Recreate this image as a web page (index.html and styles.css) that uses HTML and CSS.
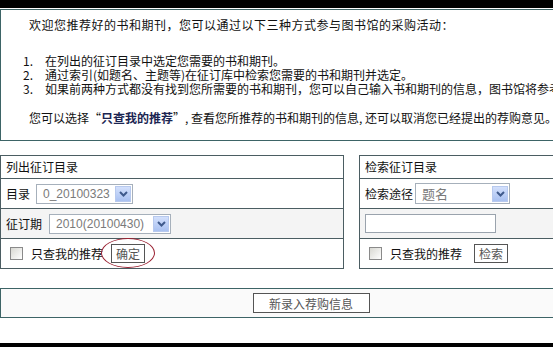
FILE: index.html
```html
<!DOCTYPE html>
<html lang="zh-CN">
<head>
    <meta charset="UTF-8">
    <title>荐购图书和期刊</title>
    <link rel="stylesheet" href="styles.css">
</head>
<body>

<div class="frame-top"></div>

<div class="page">
    <!-- 说明 -->
    <div class="intro">
        <p class="lead">欢迎您推荐好的书和期刊，您可以通过以下三种方式参与图书馆的采购活动：</p>
        <ol class="steps">
            <li><span class="num">1.</span>在列出的征订目录中选定您需要的书和期刊。</li>
            <li><span class="num">2.</span>通过索引(如题名、主题等)在征订库中检索您需要的书和期刊并选定。</li>
            <li><span class="num">3.</span>如果前两种方式都没有找到您所需要的书和期刊，您可以自己输入书和期刊的信息，图书馆将参考您的意见。</li>
        </ol>
        <p class="note">您可以选择“<b>只查我的推荐</b>”, 查看您所推荐的书和期刊的信息, 还可以取消您已经提出的荐购意见。</p>
    </div>

    <div class="panels">
        <!-- 列出征订目录 -->
        <div class="panel panel-list">
            <div class="panel-title">列出征订目录</div>
            <div class="row">
                <span class="label">目录</span>
                <div class="select select-catalog">
                    <span class="select-text">0_20100323</span>
                    <span class="arrow"><svg width="9" height="6" viewBox="0 0 9 6"><path d="M1 1l3.5 3.5L8 1" fill="none" stroke="#3f5a8c" stroke-width="2"/></svg></span>
                </div>
            </div>
            <div class="row row-alt">
                <span class="label">征订期</span>
                <div class="select select-period">
                    <span class="select-text">2010(20100430)</span>
                    <span class="arrow"><svg width="9" height="6" viewBox="0 0 9 6"><path d="M1 1l3.5 3.5L8 1" fill="none" stroke="#3f5a8c" stroke-width="2"/></svg></span>
                </div>
            </div>
            <div class="row row-last">
                <span class="check"></span>
                <span class="check-label">只查我的推荐</span>
                <span class="mark-wrap">
                    <button class="btn">确定</button>
                    <span class="mark"></span>
                </span>
            </div>
        </div>

        <!-- 检索征订目录 -->
        <div class="panel panel-search">
            <div class="panel-title">检索征订目录</div>
            <div class="row">
                <span class="label">检索途径</span>
                <div class="select select-field">
                    <span class="select-text">题名</span>
                    <span class="arrow"><svg width="9" height="6" viewBox="0 0 9 6"><path d="M1 1l3.5 3.5L8 1" fill="none" stroke="#3f5a8c" stroke-width="2"/></svg></span>
                </div>
            </div>
            <div class="row row-alt">
                <input class="text-input" type="text">
            </div>
            <div class="row row-last">
                <span class="check"></span>
                <span class="check-label">只查我的推荐</span>
                <button class="btn btn-search">检索</button>
            </div>
        </div>
    </div>

    <div class="new-bar">
        <button class="btn btn-new">新录入荐购信息</button>
    </div>
</div>

<div class="frame-bottom"></div>

</body>
</html>
```

FILE: styles.css
```css
* {
    box-sizing: border-box;
}
body {
    margin: 0;
    width: 553px;
    height: 347px;
    overflow: hidden;
    background-color: #fff;
    font-family: "Noto Sans CJK SC", sans-serif;
    font-size: 12px;
    color: #111;
}
.frame-top {
    height: 8px;
    background-color: #000;
}
.page {
    width: 622px;
    padding-top: 1px;
}

/* intro box */
.intro {
    height: 132px;
    border: 1px solid #3d6466;
    padding: 7px 0 0 28px;
}
.intro .lead {
    margin: 0;
    line-height: 16px;
    letter-spacing: 0.5px;
    white-space: nowrap;
}
.steps {
    list-style: none;
    margin: 21px 0 0 -6px;
    padding: 0;
}
.steps li {
    display: flex;
    line-height: 14px;
    white-space: nowrap;
}
.steps .num {
    width: 22px;
    flex-shrink: 0;
}
.intro .note {
    margin: 15px 0 0;
    line-height: 14px;
    white-space: nowrap;
}
.note b {
    color: #1b2552;
}

/* two panels */
.panels {
    display: flex;
    gap: 15px;
    margin-top: 14px;
}
.panel {
    border: 1px solid #4b5d62;
}
.panel-list {
    width: 344px;
}
.panel-search {
    width: 263px;
}
.panel-title {
    height: 23px;
    line-height: 22px;
    padding-left: 5px;
    border-bottom: 1px solid #4b5d62;
}
.row {
    height: 30px;
    display: flex;
    align-items: center;
    padding-left: 5px;
    border-bottom: 1px solid #4b5d62;
}
.row-alt {
    background-color: #f4f4f4;
}
.row-last {
    height: 29px;
    border-bottom: none;
}
.label {
    margin-right: 6px;
}

/* fake select boxes */
.select {
    display: flex;
    align-items: center;
    justify-content: space-between;
    height: 20px;
    padding-left: 6px;
    border: 1px solid #a6b0bb;
    background-color: #fff;
    color: #7a7a7a;
    font-family: "Liberation Sans", "Noto Sans CJK SC", sans-serif;
    font-size: 12px;
}
.select-catalog {
    width: 97px;
}
.select-period {
    width: 122px;
    margin-left: 1px;
}
.select-field {
    width: 95px;
    height: 21px;
    margin-left: -4px;
    font-family: "Noto Sans CJK SC", sans-serif;
    font-size: 13px;
}
.arrow {
    display: flex;
    align-items: center;
    justify-content: center;
    width: 16px;
    height: 16px;
    margin-right: 1px;
    border: 1px solid #b7c9ee;
    background: linear-gradient(#d3e0fc, #a9c1f1);
}
.text-input {
    width: 131px;
    height: 19px;
    border: 1px solid #9aa3ad;
    background-color: #fff;
    padding: 0;
}

/* checkbox + buttons */
.check {
    width: 13px;
    height: 13px;
    margin-left: 4px;
    border: 1px solid #8a8a8a;
    background: linear-gradient(135deg, #d8d8d2, #fff);
}
.check-label {
    margin-left: 8px;
}
.btn {
    height: 19px;
    padding: 0 4px;
    border: 1px solid #555;
    background-color: #fff;
    color: #555;
    font-family: "Noto Sans CJK SC", sans-serif;
    font-size: 12px;
    line-height: 17px;
}
.mark-wrap {
    position: relative;
    margin-left: 8px;
    display: flex;
}
.mark {
    position: absolute;
    top: -6px;
    bottom: -5px;
    left: -10px;
    right: -10px;
    border: 1px solid #9b2333;
    border-radius: 50%;
}
.btn-search {
    margin-left: 12px;
}

/* bottom bar */
.new-bar {
    height: 30px;
    margin-top: 19px;
    border: 1px solid #3d6466;
    background-color: #fafafa;
    display: flex;
    align-items: center;
    justify-content: center;
}
.btn-new {
    width: 117px;
    height: 20px;
}
.frame-bottom {
    height: 10px;
    margin-top: 25px;
    background-color: #000;
}
```
